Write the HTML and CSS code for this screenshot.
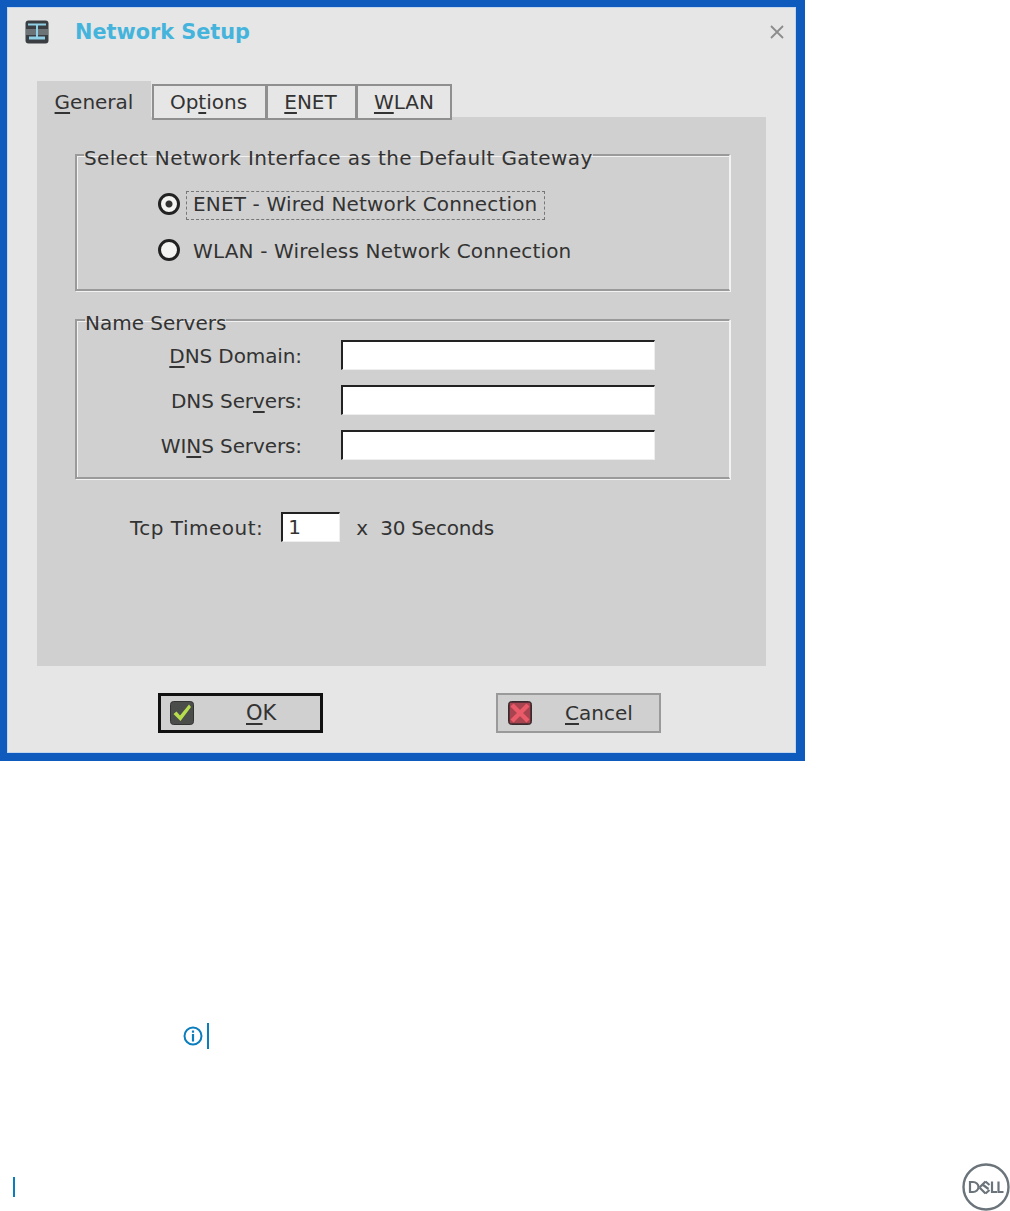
FILE: index.html
```html
<!DOCTYPE html>
<html lang="en">
<head>
<meta charset="utf-8">
<title>Network Setup</title>
<link rel="stylesheet" href="styles.css">
</head>
<body>
<div class="dialog">
  <div class="titlebar">
    <svg class="app-icon" width="24" height="24" viewBox="0 0 24 24">
      <rect x="0.5" y="0.5" width="23" height="23" rx="3" fill="#3a3e42"/>
      <rect x="1" y="9" width="22" height="6" fill="#6d7478"/>
      <path d="M3 3.500h18v2H13v11h7v3H4v-3h7v-11H3z" fill="#8fd0e6"/>
    </svg>
    <span class="title">Network Setup</span>
    <svg class="close" width="14" height="14" viewBox="0 0 14 14"><path d="M1 1l12 12M13 1L1 13" stroke="#8c8c8c" stroke-width="1.8" fill="none"/></svg>
  </div>
  <div class="tabs">
    <div class="tab active"><u>G</u>eneral</div>
    <div class="tab w-options">Op<u>t</u>ions</div>
    <div class="tab w-enet"><u>E</u>NET</div>
    <div class="tab w-wlan"><u>W</u>LAN</div>
  </div>
  <div class="panel">
    <fieldset class="group gateway">
      <legend>Select Network Interface as the Default Gateway</legend>
      <div class="radio-row first">
        <span class="radio checked"></span>
        <span class="radio-label focused">ENET - Wired Network Connection</span>
      </div>
      <div class="radio-row">
        <span class="radio"></span>
        <span class="radio-label">WLAN - Wireless Network Connection</span>
      </div>
    </fieldset>
    <fieldset class="group servers">
      <legend>Name Servers</legend>
      <div class="field-row first"><label><u>D</u>NS Domain:</label><span class="input"></span></div>
      <div class="field-row"><label>DNS Ser<u>v</u>ers:</label><span class="input"></span></div>
      <div class="field-row"><label>WI<u>N</u>S Servers:</label><span class="input"></span></div>
    </fieldset>
    <div class="timeout">
      <span class="timeout-label">Tcp Timeout:</span>
      <span class="input small">1</span>
      <span class="times">x</span>
      <span class="seconds">30 Seconds</span>
    </div>
  </div>
  <div class="actions">
    <div class="btn default">
      <svg width="24" height="24" viewBox="0 0 24 24"><rect x="0.5" y="0.5" width="23" height="23" rx="3" fill="#4b4d4b" stroke="#333"/><path d="M3.500 13l3-2.500 3.500 4L19 3.500l2 2.500L10.500 20z" fill="#b7dd4e"/></svg>
      <span class="btn-label"><u>O</u>K</span>
    </div>
    <div class="btn cancel">
      <svg width="24" height="24" viewBox="0 0 24 24"><rect x="0.5" y="0.5" width="23" height="23" rx="3" fill="#5a3138" stroke="#3a2a2d"/><rect x="2" y="2" width="20" height="20" fill="#a8444f"/><path d="M4 4l16 16M20 4L4 20" stroke="#ea5a68" stroke-width="4.500"/></svg>
      <span class="btn-label"><u>C</u>ancel</span>
    </div>
  </div>
</div>
<div class="note">
  <svg width="20" height="20" viewBox="0 0 20 20"><circle cx="10" cy="10" r="8.500" fill="none" stroke="#0a7dbd" stroke-width="2"/><rect x="8.900" y="4.500" width="2.200" height="2.200" fill="#0a7dbd"/><rect x="8.900" y="8" width="2.200" height="7.500" fill="#0a7dbd"/></svg>
  <span class="rule"></span>
</div>
<div class="page-foot">
  <span class="rule short"></span>
  <svg class="dell" width="48" height="48" viewBox="0 0 48 48" role="img" aria-label="Dell">
    <circle cx="24" cy="24" r="22.500" fill="none" stroke="#6b747a" stroke-width="2.400"/>
    <g fill="none" stroke="#6b747a" stroke-width="2.200">
      <path d="M8 19h3a5.500 5 0 0 1 0 10H8z"/>
      <path d="M17.500 24.500L23.500 18.500M17.500 24.500L23.500 30.500M20.500 21.500l6 4.500M23.500 18.500l4 3.500M23.500 30.500l4-3.500"/>
      <path d="M30 18.500V29h5M36.500 18.500V29h5"/>
    </g>
  </svg>
</div>
</body>
</html>
```
FILE: styles.css
```css
* { box-sizing: border-box; }
html, body { margin: 0; padding: 0; background: #fff; }
body {
  width: 1010px;
  height: 1211px;
  overflow: hidden;
  font-family: "DejaVu Sans", sans-serif;
  font-size: 20px;
  color: #333;
}
u { text-underline-offset: 3px; text-decoration-thickness: 2px; }

.dialog {
  width: 805px;
  height: 761px;
  background: #e6e6e6;
  border: solid #0f5bbd;
  border-width: 7px 9px 8px 7px;
  box-shadow: inset 0 0 0 1px #c4d6ee;
}
.titlebar {
  display: flex;
  align-items: center;
  height: 50px;
  padding-left: 18px;
}
.title {
  margin-left: 26px;
  font-weight: bold;
  font-size: 20.8px;
  color: #45b4dc;
}
.close { margin-left: auto; margin-right: 12px; }

.tabs {
  display: flex;
  align-items: flex-end;
  position: relative;
  margin: 24px 0 -3px 30px;
  height: 39px;
}
.tab {
  display: flex;
  align-items: center;
  justify-content: center;
  height: 36px;
  border: 2px solid #8f8f8f;
  margin-left: -1px;
  background: #e6e6e6;
  padding: 0 2px 1px 0;
}
.tab.active {
  width: 114px;
  height: 36px;
  align-self: flex-start;
  margin: 0 2px 0 0;
  border: 0;
  background: #d0d0d0;
  padding: 6px 0 0;
}
.w-options { width: 115px; }
.w-enet { width: 91px; }
.w-wlan { width: 96px; padding-right: 0; }

.panel {
  width: 729px;
  height: 549px;
  margin-left: 30px;
  padding: 23px 36px 0 38px;
  background: #d0d0d0;
}
.group {
  margin: 0;
  padding: 0;
  border: 0;
  border-top: 2px solid #9a9a9a;
  border-left: 2px solid #9a9a9a;
  border-right: 1px solid #f2f2f2;
  border-bottom: 2px solid #9a9a9a;
  box-shadow: 1px 1px 0 #f2f2f2, inset 1px 1px 0 #f2f2f2;
}
.group legend {
  padding: 6px 0 0;
  margin-left: 7px;
  line-height: 24px;
  background: transparent;
}
.gateway { height: 151px; }
.gateway legend { letter-spacing: 0.4px; }
.servers { height: 174px; margin-top: 14px; }
.servers legend { margin-left: 8px; }

.radio-row {
  display: flex;
  align-items: center;
  height: 34px;
  margin: 11px 0 0 81px;
}
.radio-row.first { margin-top: 19px; }
.radio {
  width: 22px;
  height: 22px;
  border: 3px solid #222;
  border-radius: 50%;
  background: #f4f4f2;
  flex: none;
  margin-bottom: 2px;
}
.radio.checked {
  background: radial-gradient(circle, #333 0 3px, #f4f4f2 4px);
  margin-bottom: 4px;
}
.radio-label {
  margin-left: 6px;
  padding: 0 8px 0 7px;
  line-height: 30px;
  letter-spacing: 0.16px;
}
.radio-label.focused {
  outline: 1px dashed #777;
  outline-offset: -1px;
  height: 29px;
  line-height: 27px;
  margin-bottom: 2px;
}

.field-row {
  display: flex;
  align-items: center;
  height: 30px;
  margin-top: 15px;
}
.field-row.first { margin-top: 6px; }
.field-row label {
  width: 225px;
  text-align: right;
  letter-spacing: -0.1px;
}
.input {
  display: block;
  width: 314px;
  height: 30px;
  margin: 0 0 2px 39px;
  background: #fff;
  border-top: 2px solid #222;
  border-left: 2px solid #222;
  border-right: 1px solid #eee;
  border-bottom: 1px solid #eee;
}
.input.small {
  width: 59px;
  margin-left: 18px;
  padding-left: 5px;
  line-height: 27px;
}

.timeout {
  display: flex;
  align-items: center;
  margin: 34px 0 0 55px;
  height: 30px;
}
.timeout-label { letter-spacing: 0.5px; }
.times { margin: 0 12px 0 16px; }
.seconds { letter-spacing: -0.2px; }

.actions {
  display: flex;
  padding: 27px 0 0 151px;
}
.btn {
  display: flex;
  align-items: center;
  width: 165px;
  height: 40px;
  padding-left: 10px;
  background: #d0d0d0;
  border: 2px solid #9a9a9a;
}
.btn.default { border: 3px solid #111; padding-left: 9px; font-size: 21px; }
.btn.cancel { margin-left: 173px; }
.btn-label { margin-left: 52px; padding-bottom: 1px; }
.btn.cancel .btn-label { margin-left: 33px; }

.note {
  display: flex;
  align-items: center;
  margin: 262px 0 0 183px;
  height: 26px;
}
.rule {
  display: block;
  width: 2px;
  height: 26px;
  margin-left: 4px;
  background: #0a7dbd;
}
.page-foot {
  display: flex;
  align-items: center;
  justify-content: space-between;
  height: 48px;
  margin-top: 114px;
  padding: 0 0 0 13px;
}
.rule.short { height: 20px; margin-left: 0; }
```
